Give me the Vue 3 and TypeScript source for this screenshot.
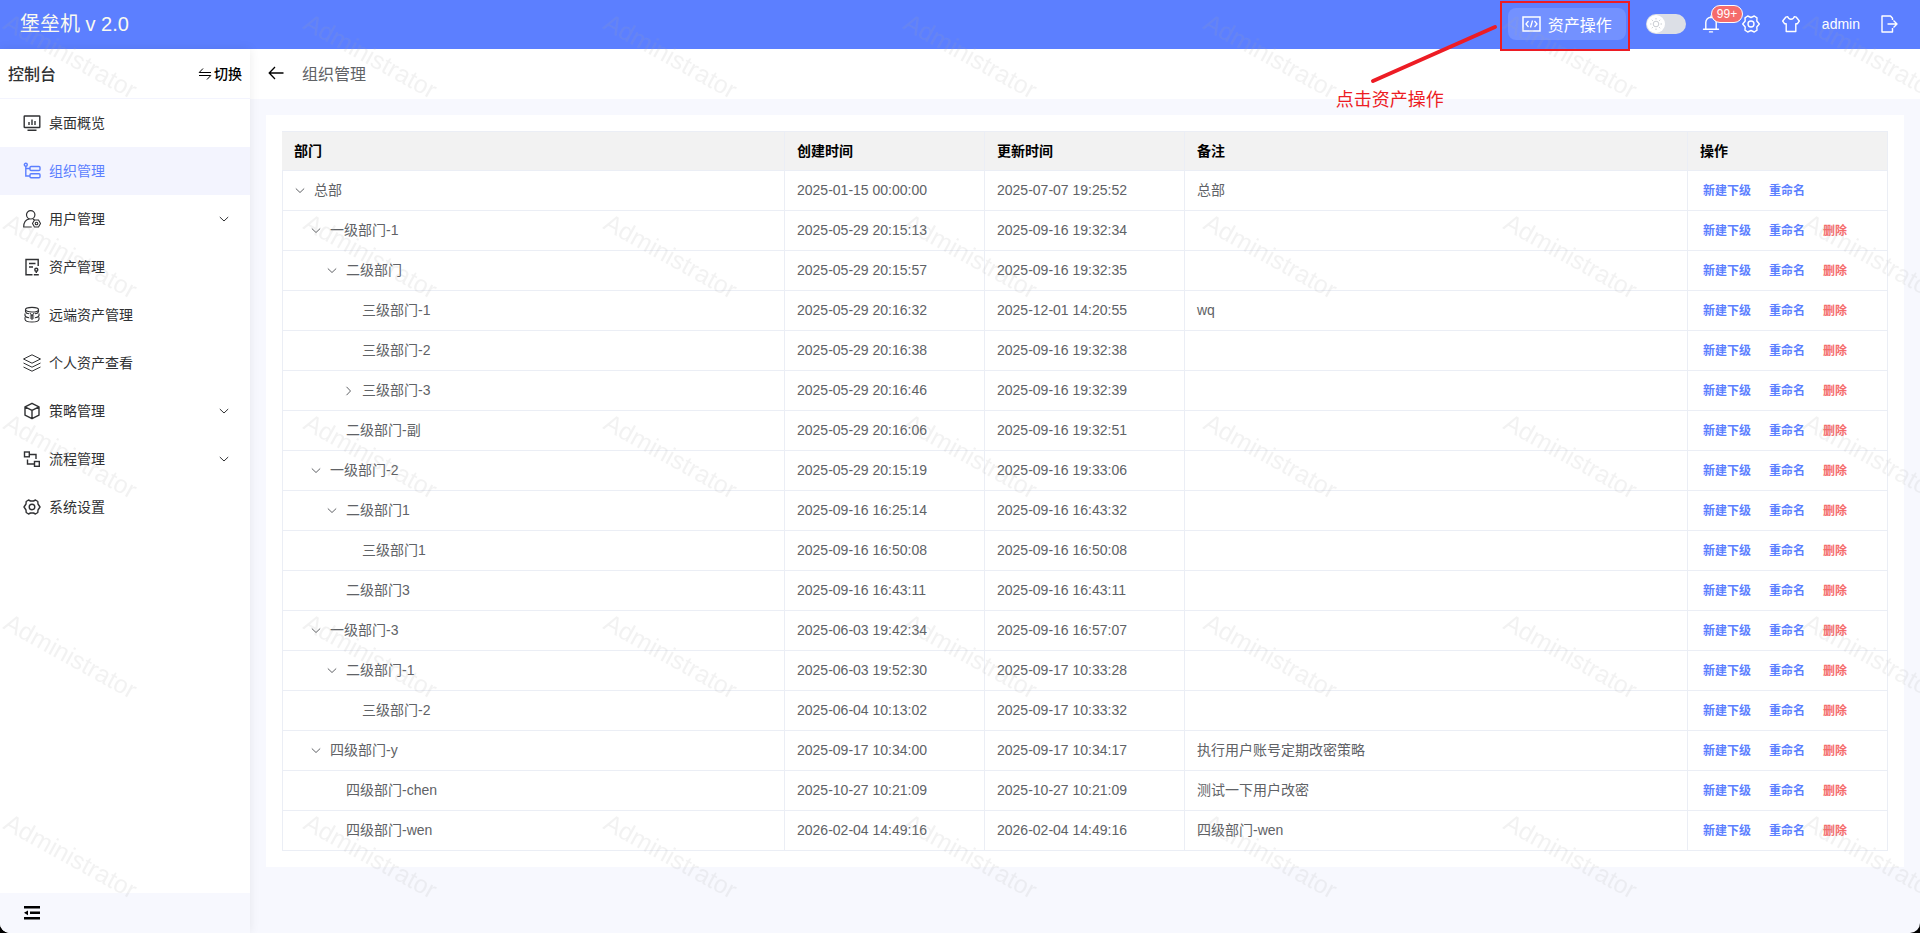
<script setup lang="ts">
import { ref } from 'vue'

interface MenuItem {
  icon: string
  label: string
  expandable?: boolean
  active?: boolean
}

interface Row {
  level: number
  name: string
  created: string
  updated: string
  note?: string
  state?: 'open' | 'closed'
}

const menu: MenuItem[] = [
  { icon: 'dashboard', label: '桌面概览' },
  { icon: 'tree', label: '组织管理', active: true },
  { icon: 'user', label: '用户管理', expandable: true },
  { icon: 'asset', label: '资产管理' },
  { icon: 'remote', label: '远端资产管理' },
  { icon: 'layers', label: '个人资产查看' },
  { icon: 'box', label: '策略管理', expandable: true },
  { icon: 'flow', label: '流程管理', expandable: true },
  { icon: 'gear', label: '系统设置' },
]

const rows: Row[] = [
  { level: 0, name: '总部', created: '2025-01-15 00:00:00', updated: '2025-07-07 19:25:52', note: '总部', state: 'open' },
  { level: 1, name: '一级部门-1', created: '2025-05-29 20:15:13', updated: '2025-09-16 19:32:34', state: 'open' },
  { level: 2, name: '二级部门', created: '2025-05-29 20:15:57', updated: '2025-09-16 19:32:35', state: 'open' },
  { level: 3, name: '三级部门-1', created: '2025-05-29 20:16:32', updated: '2025-12-01 14:20:55', note: 'wq' },
  { level: 3, name: '三级部门-2', created: '2025-05-29 20:16:38', updated: '2025-09-16 19:32:38' },
  { level: 3, name: '三级部门-3', created: '2025-05-29 20:16:46', updated: '2025-09-16 19:32:39', state: 'closed' },
  { level: 2, name: '二级部门-副', created: '2025-05-29 20:16:06', updated: '2025-09-16 19:32:51' },
  { level: 1, name: '一级部门-2', created: '2025-05-29 20:15:19', updated: '2025-09-16 19:33:06', state: 'open' },
  { level: 2, name: '二级部门1', created: '2025-09-16 16:25:14', updated: '2025-09-16 16:43:32', state: 'open' },
  { level: 3, name: '三级部门1', created: '2025-09-16 16:50:08', updated: '2025-09-16 16:50:08' },
  { level: 2, name: '二级部门3', created: '2025-09-16 16:43:11', updated: '2025-09-16 16:43:11' },
  { level: 1, name: '一级部门-3', created: '2025-06-03 19:42:34', updated: '2025-09-16 16:57:07', state: 'open' },
  { level: 2, name: '二级部门-1', created: '2025-06-03 19:52:30', updated: '2025-09-17 10:33:28', state: 'open' },
  { level: 3, name: '三级部门-2', created: '2025-06-04 10:13:02', updated: '2025-09-17 10:33:32' },
  { level: 1, name: '四级部门-y', created: '2025-09-17 10:34:00', updated: '2025-09-17 10:34:17', note: '执行用户账号定期改密策略', state: 'open' },
  { level: 2, name: '四级部门-chen', created: '2025-10-27 10:21:09', updated: '2025-10-27 10:21:09', note: '测试一下用户改密' },
  { level: 2, name: '四级部门-wen', created: '2026-02-04 14:49:16', updated: '2026-02-04 14:49:16', note: '四级部门-wen' },
]

const dark = ref(false)
</script>

<template>
  <div class="app">
    <header class="topbar">
      <h1 class="brand">堡垒机 v 2.0</h1>
      <div class="tools">
        <div class="asset-wrap">
          <button type="button" class="asset-btn">
            <svg width="20" height="16" viewBox="0 0 20 16" fill="none" stroke="currentColor" stroke-width="1.5">
              <rect x="1" y="1" width="17" height="14" />
              <path d="M6.500 5 4 8l2.500 3M12.500 5l2.500 3-2.500 3M10.500 4.500l-2 7" stroke-width="1.300" />
            </svg>
            <span>资产操作</span>
          </button>
          <div class="callout-frame"></div>
          <svg class="callout-line" width="128" height="62" viewBox="0 0 128 62">
            <path d="M3 59 125 5" stroke="#ed1c24" stroke-width="4" stroke-linecap="round" />
          </svg>
          <span class="callout-text">点击资产操作</span>
        </div>
        <label class="switch" aria-label="深色模式">
          <input v-model="dark" type="checkbox" role="switch" />
          <span class="knob">
            <svg width="14" height="14" viewBox="0 0 14 14" fill="none" stroke="#c9ccd2" stroke-width="1">
              <circle cx="7" cy="7" r="2.800" />
              <path d="M7 1v1.500M7 11.500V13M1 7h1.500M11.500 7H13M2.800 2.800l1 1M10.200 10.200l1 1M2.800 11.200l1-1M10.200 3.800l1-1" />
            </svg>
          </span>
        </label>
        <button type="button" class="icon-btn bell" aria-label="通知">
          <svg width="18" height="18" viewBox="0 0 18 18" fill="none" stroke="currentColor" stroke-width="1.400" stroke-linecap="round" stroke-linejoin="round">
            <path d="M9 1v1.500M3.800 14V7.500a5.200 5.200 0 0 1 10.400 0V14M1.500 14.200h15M7.500 16.900h3" />
          </svg>
          <span class="badge">99+</span>
        </button>
        <button type="button" class="icon-btn" aria-label="设置">
          <svg width="18" height="18" viewBox="0 0 18 18" fill="none" stroke="currentColor" stroke-width="1.400" stroke-linejoin="round">
            <path d="M5.700 1 9 2.500 12.300 1 15 2.800 14.800 6 17.300 9l-2.500 3 .2 3.200-2.700 1.800L9 15.500 5.700 17 3 15.200 3.200 12 .7 9l2.500-3L3 2.800z" />
            <circle cx="9" cy="9" r="3" />
          </svg>
        </button>
        <button type="button" class="icon-btn" aria-label="主题">
          <svg width="18" height="18" viewBox="0 0 18 18" fill="none" stroke="currentColor" stroke-width="1.400" stroke-linejoin="round">
            <path d="M5.700 1.600a3.400 3.400 0 0 0 6.600 0l2 .6 3 3.800-2 2.800h-1.500V16.500H4.200V8.800H2.700L.7 6l3-3.800z" />
          </svg>
        </button>
        <button type="button" class="user-btn">admin</button>
        <button type="button" class="icon-btn" aria-label="退出">
          <svg width="18" height="18" viewBox="0 0 18 18" fill="none" stroke="currentColor" stroke-width="1.400" stroke-linejoin="round">
            <path d="M12.500 5V3.200L10.500 1H2v16h10.500V13M7.500 9H17M13.500 5.500 17 9l-3.500 3.500" />
          </svg>
        </button>
      </div>
    </header>

    <div class="body">
      <aside class="sidebar">
        <div class="side-head">
          <span class="side-title">控制台</span>
          <button type="button" class="swap">
            <svg width="14" height="14" viewBox="0 0 14 14" fill="none" stroke="currentColor" stroke-width="1">
              <path d="M5 2.500 1.200 6.500H13M1 9.500h11.800L9 13.500" />
            </svg>
            <span>切换</span>
          </button>
        </div>
        <nav class="menu">
          <a v-for="m in menu" :key="m.label" href="#" class="menu-item" :class="{ active: m.active }">
            <svg class="menu-icon" width="18" height="18" viewBox="0 0 18 18" fill="none" stroke="currentColor" stroke-width="1.400">
              <template v-if="m.icon === 'dashboard'">
                <rect x="1.200" y="2" width="15.600" height="11.500" rx="0.500" />
                <path d="M6 8v3M9 5.500V11M12 7v4M4.500 16.200h9" />
              </template>
              <template v-else-if="m.icon === 'tree'">
                <circle cx="2.800" cy="2.700" r="1.500" />
                <path d="M2.800 4.200V14H7M2.800 6.500H7" />
                <rect x="7" y="4.500" width="10" height="4" rx="1" />
                <rect x="7" y="11.700" width="10" height="4" rx="1" />
              </template>
              <template v-else-if="m.icon === 'user'">
                <circle cx="7.700" cy="4.800" r="4.200" stroke-width="1.200" />
                <path d="M6.500 9C2.500 9.500.7 13 .7 17h8M10 9.200l1.500.8" stroke-width="1.200" />
                <path d="M11.500 10h4l2 3.500-2 3.500h-4l-2-3.500z" stroke-width="1.100" />
                <circle cx="13.500" cy="13.500" r="1.300" stroke-width="1.100" />
              </template>
              <template v-else-if="m.icon === 'asset'">
                <path d="M15.200 8V1.500H3V16.700h6.500M6 5.500h6.500M6 9h4" />
                <circle cx="13.300" cy="11.800" r="1.500" />
                <path d="M13.300 13.500V15M10.800 16.700h5" />
              </template>
              <template v-else-if="m.icon === 'remote'">
                <ellipse cx="9" cy="3.700" rx="6.500" ry="2.300" stroke-width="1.100" />
                <path d="M2.500 3.700v2C3 7 5 7.700 6 7.800M15.500 3.700v2c-.5 1.300-2.500 2-3.500 2.100M2 7.500v2c.3 1.200 2 2 4 2.200M16 7.500v2c-.3 1.200-2 2-4 2.200M2 11.200v2c.5 3.700 13.500 3.700 14 0v-2M6.800 7 9 9.500 11.200 7M9 9.500V14M6.800 10h4.400M6.800 12h4.400" stroke-width="1.100" />
              </template>
              <template v-else-if="m.icon === 'layers'">
                <path d="M9 .8 17.500 5 9 9.200.5 5zM.5 9 9 13.200 17.500 9M.5 13 9 17.200l8.500-4.200" stroke-width="1" />
              </template>
              <template v-else-if="m.icon === 'box'">
                <path d="m9 1.300 7 3.500v8.400l-7 3.500-7-3.500V4.800zM2 4.800l7 3.500 7-3.500M9 8.300v8.400" stroke-linejoin="round" />
              </template>
              <template v-else-if="m.icon === 'flow'">
                <rect x="1.500" y="2" width="4.800" height="4.800" />
                <rect x="11.500" y="11.500" width="4.800" height="4.800" />
                <path d="M6.500 4.500H13V9M11.500 14H4.500V9.500" />
              </template>
              <template v-else>
                <path d="M5.500 2 7.500 3h3l2-1 2.300 1.500L15 6l2 3-2 3-.2 2.500L12.500 16l-2-1h-3l-2 1-2.300-1.500L3 12 1 9l2-3 .2-2.500z" stroke-linejoin="round" />
                <circle cx="9" cy="9" r="2.800" />
              </template>
            </svg>
            <span class="menu-label">{{ m.label }}</span>
            <svg v-if="m.expandable" class="menu-arrow" width="10" height="10" viewBox="0 0 10 10" fill="none" stroke="currentColor">
              <path d="m.8 3 4.200 4L9.200 3" />
            </svg>
          </a>
        </nav>
        <div class="side-foot">
          <button type="button" class="fold" aria-label="收起菜单">
            <svg width="16" height="14" viewBox="0 0 16 14" fill="#000">
              <path d="M0 0h16v2.400H0zM6 5.600h10V8H6zM0 11h16v2.400H0zM0 6.800 4 4.400v4.800z" />
            </svg>
          </button>
        </div>
      </aside>

      <main class="main">
        <div class="crumb">
          <button type="button" class="back" aria-label="返回">
            <svg width="16" height="14" viewBox="0 0 16 14" fill="none" stroke="#000" stroke-width="1.300">
              <path d="M15.500 7H1.500M7 1 1.200 7 7 13" />
            </svg>
          </button>
          <h2>组织管理</h2>
        </div>
        <section class="card">
          <table>
            <colgroup>
              <col />
              <col class="fixed" />
              <col class="fixed" />
              <col />
              <col class="fixed" />
            </colgroup>
            <thead>
              <tr>
                <th>部门</th>
                <th>创建时间</th>
                <th>更新时间</th>
                <th>备注</th>
                <th>操作</th>
              </tr>
            </thead>
            <tbody>
              <tr v-for="(r, i) in rows" :key="i">
                <td>
                  <div class="node" :style="{ paddingLeft: r.level * 16 + 'px' }">
                    <span class="slot">
                      <button v-if="r.state" type="button" class="toggle" :aria-label="r.state === 'open' ? '收起' : '展开'">
                        <svg width="12" height="12" viewBox="0 0 12 12" fill="none" stroke="currentColor">
                          <path v-if="r.state === 'open'" d="m1.800 3.500 4.200 4 4.200-4" />
                          <path v-else d="m4.500 1.800 4 4.200-4 4.200" />
                        </svg>
                      </button>
                    </span>
                    <span>{{ r.name }}</span>
                  </div>
                </td>
                <td>{{ r.created }}</td>
                <td>{{ r.updated }}</td>
                <td>{{ r.note }}</td>
                <td>
                  <div class="actions">
                    <button type="button">新建下级</button>
                    <button type="button">重命名</button>
                    <button v-if="r.level > 0" type="button" class="danger">删除</button>
                  </div>
                </td>
              </tr>
            </tbody>
          </table>
        </section>
      </main>
    </div>

    <svg class="watermark" width="100%" height="100%" aria-hidden="true">
      <defs>
        <pattern id="wm" width="300" height="200" patternUnits="userSpaceOnUse">
          <text x="0" y="0" transform="translate(2 28) rotate(29)">Administrator</text>
        </pattern>
      </defs>
      <rect width="100%" height="100%" fill="url(#wm)" />
    </svg>
  </div>
</template>

<style>
body {
  background: #000;
}
</style>

<style scoped>
.app {
  position: relative;
  display: flex;
  flex-direction: column;
  min-height: 100vh;
  overflow: hidden;
  border-radius: 0 0 10px 10px;
  background: #f7f8fe;
  font-family: 'Liberation Sans', 'Noto Sans CJK SC', sans-serif;
  font-size: 14px;
  color: #303133;
}
.app * {
  box-sizing: border-box;
}
button {
  padding: 0;
  border: 0;
  background: none;
  font: inherit;
  color: inherit;
  cursor: pointer;
}
svg {
  display: block;
}
.topbar {
  display: flex;
  align-items: center;
  justify-content: space-between;
  height: 49px;
  padding: 0 22px 2px 20px;
  background: #5c7fff;
  color: #fff;
}
.brand {
  margin: 0;
  font-size: 20px;
  line-height: 28px;
  font-weight: 400;
  color: #fafaf0;
}
.tools {
  display: flex;
  align-items: center;
}
.asset-wrap {
  position: relative;
  margin-right: 20px;
}
.asset-btn {
  display: flex;
  align-items: center;
  gap: 6px;
  height: 32px;
  padding: 0 14px;
  border-radius: 8px;
  background: #7391ff;
  font-size: 16px;
}
.callout-frame {
  position: absolute;
  z-index: 3;
  inset: -7px -4px -11px -8px;
  border: 2px solid #ed1c24;
  pointer-events: none;
}
.callout-line {
  position: absolute;
  z-index: 3;
  top: 14px;
  right: 128px;
}
.callout-text {
  position: absolute;
  z-index: 3;
  top: 79px;
  right: 182px;
  font-size: 18px;
  line-height: 26px;
  white-space: nowrap;
  color: #ed1c24;
}
.switch {
  display: flex;
  align-items: center;
  width: 40px;
  height: 20px;
  margin-right: 16px;
  padding: 0 1px;
  border-radius: 10px;
  background: #dcdfe6;
  cursor: pointer;
}
.switch input {
  position: absolute;
  opacity: 0;
  margin: 0;
}
.knob {
  display: grid;
  place-items: center;
  width: 18px;
  height: 18px;
  border-radius: 50%;
  background: #fff;
}
.switch:has(input:checked) {
  justify-content: flex-end;
}
.icon-btn {
  width: 18px;
  height: 18px;
  margin-right: 22px;
}
.icon-btn:last-child {
  margin-right: 0;
}
.bell {
  position: relative;
}
.badge {
  position: absolute;
  z-index: 1;
  left: 9px;
  top: -10px;
  padding: 0 5px;
  border: 1px solid #fff;
  border-radius: 9px;
  background: #f56c6c;
  font-size: 12px;
  line-height: 16px;
}
.user-btn {
  margin: 0 20px 0 0;
}
.body {
  display: flex;
  flex: 1;
}
.sidebar {
  position: relative;
  display: flex;
  flex-direction: column;
  width: 250px;
  flex: none;
  background: #fff;
  box-shadow: 0 0 10px rgba(0, 0, 0, 0.08);
}
.side-head {
  display: flex;
  align-items: center;
  justify-content: space-between;
  height: 50px;
  padding: 0 8px 2px;
  border-bottom: 1px solid #f3f4fe;
}
.side-title {
  font-size: 16px;
  font-weight: 500;
}
.swap {
  display: flex;
  align-items: center;
  gap: 2px;
  font-weight: 500;
  color: #000;
}
.menu-item {
  display: flex;
  align-items: center;
  height: 48px;
  padding: 0 21px 0 23px;
  text-decoration: none;
  color: #303133;
}
.menu-item.active {
  background: #f3f4fe;
  color: #5c7fff;
}
.menu-icon {
  margin-right: 8px;
}
.menu-label {
  padding-bottom: 2px;
}
.menu-arrow {
  margin-left: auto;
}
.side-foot {
  display: flex;
  align-items: center;
  height: 40px;
  margin-top: auto;
  padding-left: 24px;
  background: #f7f8fe;
}
.main {
  flex: 1;
  min-width: 0;
}
.crumb {
  display: flex;
  align-items: center;
  gap: 18px;
  height: 50px;
  padding: 0 0 2px 18px;
  background: #fff;
}
.crumb h2 {
  margin: 0;
  font-size: 16px;
  font-weight: 400;
  color: #606266;
}
.card {
  margin: 16px;
  padding: 16px;
  background: #fff;
}
table {
  width: 100%;
  table-layout: fixed;
  border-collapse: separate;
  border-spacing: 0;
  line-height: 23px;
  color: #606266;
}
.fixed {
  width: 200px;
}
th,
td {
  height: 40px;
  padding: 0 12px;
  border-right: 1px solid #ebeef5;
  border-bottom: 1px solid #ebeef5;
  text-align: left;
}
th {
  padding-top: 2px;
  background: #f2f2f2;
  box-shadow: inset 0 1px #ebeef5;
  font-weight: 700;
  color: #000;
}
td:first-child {
  box-shadow: inset 1px 0 #ebeef5;
}
.node {
  display: flex;
  align-items: center;
}
.slot {
  width: 20px;
}
.toggle {
  display: block;
}
.actions {
  display: flex;
  gap: 12px;
  padding-top: 2px;
  font-size: 12px;
  font-weight: 700;
  color: #5c7fff;
}
.actions button {
  padding: 0 3px;
}
.actions .danger {
  color: #f56c6c;
}
.watermark {
  position: absolute;
  z-index: 2;
  inset: 0;
  pointer-events: none;
}
.watermark text {
  font-size: 25px;
  fill: rgba(160, 160, 160, 0.14);
}
</style>
